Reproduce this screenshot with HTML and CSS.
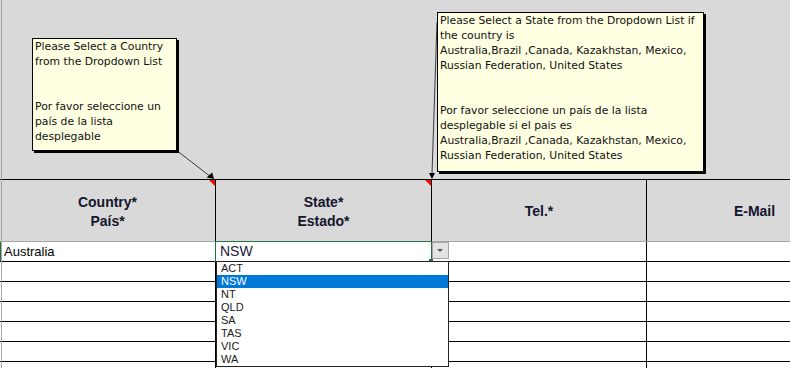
FILE: index.html
```html
<!DOCTYPE html>
<html lang="en">
<head>
    <meta charset="UTF-8">
    <title>Contact sheet</title>
    <link rel="stylesheet" href="styles.css">
</head>
<body>
    <div class="sheet">
        <div class="banner"></div>
        <div class="row head">
            <div class="cell col-a flag">Country*<br>País*</div>
            <div class="cell col-b flag">State*<br>Estado*</div>
            <div class="cell col-c">Tel.*</div>
            <div class="cell col-d">E-Mail</div>
        </div>
        <div class="row data first">
            <div class="cell col-a">Australia</div>
            <div class="cell col-b sel">NSW</div>
            <div class="cell col-c"></div>
            <div class="cell col-d"></div>
        </div>
        <div class="row data"><div class="cell col-a"></div><div class="cell col-b"></div><div class="cell col-c"></div><div class="cell col-d"></div></div>
        <div class="row data"><div class="cell col-a"></div><div class="cell col-b"></div><div class="cell col-c"></div><div class="cell col-d"></div></div>
        <div class="row data"><div class="cell col-a"></div><div class="cell col-b"></div><div class="cell col-c"></div><div class="cell col-d"></div></div>
        <div class="row data"><div class="cell col-a"></div><div class="cell col-b"></div><div class="cell col-c"></div><div class="cell col-d"></div></div>
        <div class="row data"><div class="cell col-a"></div><div class="cell col-b"></div><div class="cell col-c"></div><div class="cell col-d"></div></div>
        <div class="row data"><div class="cell col-a"></div><div class="cell col-b"></div><div class="cell col-c"></div><div class="cell col-d"></div></div>

        <!-- comment arrows -->
        <svg class="arrows" width="790" height="368" viewBox="0 0 790 368">
            <line x1="176" y1="150" x2="211" y2="177" stroke="#3a3a3a" stroke-width="1"/>
            <polygon points="214,179 206.6,177.6 212.2,172.6" fill="#000"/>
            <line x1="437" y1="22" x2="432" y2="174" stroke="#3a3a3a" stroke-width="1"/>
            <polygon points="429,173 435,173 432,179" fill="#000"/>
        </svg>

        <div class="note note-a">
            Please Select a Country<br>
            from the Dropdown List<br>
            <br>
            <br>
            Por favor seleccione un<br>
            país de la lista<br>
            desplegable
        </div>
        <div class="note note-b">
            Please Select a State from the Dropdown List if<br>
            the country is<br>
            Australia,Brazil ,Canada, Kazakhstan, Mexico,<br>
            Russian Federation, United States<br>
            <br>
            <br>
            Por favor seleccione un país de la lista<br>
            desplegable si el pais es<br>
            Australia,Brazil ,Canada, Kazakhstan, Mexico,<br>
            Russian Federation, United States
        </div>

        <div class="dd-btn"></div>
        <ul class="dd-list">
            <li>ACT</li>
            <li class="active">NSW</li>
            <li>NT</li>
            <li>QLD</li>
            <li>SA</li>
            <li>TAS</li>
            <li>VIC</li>
            <li>WA</li>
        </ul>
    </div>
</body>
</html>
```

FILE: styles.css
```css
html, body {
    margin: 0;
    padding: 0;
}
body {
    background: #d9d9d9;
    width: 790px;
    height: 368px;
    overflow: hidden;
    font-family: "Liberation Sans", Arial, sans-serif;
}
.sheet {
    position: relative;
    width: 790px;
    height: 368px;
    overflow: hidden;
}
.sheet::before {
    content: "";
    position: absolute;
    left: 1px;
    top: 0;
    width: 1px;
    height: 100%;
    background: #a6a6a6;
    z-index: 1;
}
.banner {
    height: 180px;
    box-sizing: border-box;
    border-bottom: 1px solid #000;
}
.row {
    display: flex;
    width: 864px;
}
.cell {
    flex: none;
    box-sizing: border-box;
    border-right: 1px solid #000;
}
.col-a { width: 216px; }
.col-b { width: 216px; }
.col-c { width: 215px; }
.col-d { width: 216px; }

.head {
    height: 62px;
    box-sizing: border-box;
    border-bottom: 1px solid #a6a6a6;
}
.head .cell {
    display: flex;
    align-items: center;
    justify-content: center;
    text-align: center;
    padding-top: 2px;
    font-weight: bold;
    font-size: 14px;
    line-height: 19px;
    color: #15152e;
    position: relative;
}
.head .flag::after {
    content: "";
    position: absolute;
    top: 0;
    right: 0;
    width: 0;
    height: 0;
    border-top: 6px solid #ff0000;
    border-left: 6px solid transparent;
}

.data {
    height: 20px;
    box-sizing: border-box;
    border-bottom: 1px solid #000;
    background: #fff;
}
.data .cell {
    font-size: 13px;
    line-height: 19px;
    padding-left: 4px;
    color: #000;
}
.first .col-a {
    box-shadow: inset 2px 0 0 #217346;
}
.data .sel {
    position: relative;
    font-size: 14px;
    color: #1a1a3a;
}
.sel::before {
    content: "";
    position: absolute;
    left: -1px;
    top: -1px;
    right: -1px;
    bottom: -1px;
    border: 1px solid #217346;
}
.sel::after {
    content: "";
    position: absolute;
    right: -2px;
    bottom: -2px;
    width: 4px;
    height: 4px;
    background: #217346;
}

.arrows {
    position: absolute;
    left: 0;
    top: 0;
    pointer-events: none;
}

.note {
    position: absolute;
    box-sizing: border-box;
    background: #ffffe1;
    border: 1px solid #000;
    box-shadow: 2px 2px 0 #000;
    padding: 0 2px;
    font-family: "DejaVu Sans", sans-serif;
    font-size: 10.8px;
    line-height: 15px;
    color: #111;
    white-space: nowrap;
    overflow: hidden;
}
.note-a {
    left: 32px;
    top: 38px;
    width: 145px;
    height: 113px;
}
.note-b {
    left: 437px;
    top: 12px;
    width: 267px;
    height: 160px;
}

.dd-btn {
    position: absolute;
    left: 432px;
    top: 242px;
    width: 17px;
    height: 17px;
    box-sizing: border-box;
    border: 1px solid #a6a6a6;
    background: #e3e3e3;
}
.dd-btn::after {
    content: "";
    position: absolute;
    left: 4px;
    top: 6px;
    width: 0;
    height: 0;
    border-left: 3px solid transparent;
    border-right: 3px solid transparent;
    border-top: 3px solid #555;
}
.dd-list {
    position: absolute;
    left: 216px;
    top: 261px;
    width: 233px;
    margin: 0;
    padding: 0;
    list-style: none;
    box-sizing: border-box;
    border: 1px solid #222;
    background: #fff;
    font-size: 11px;
    line-height: 13px;
    color: #1a1a1a;
}
.dd-list li {
    padding-left: 4px;
}
.dd-list .active {
    background: #0078d7;
    color: #fff;
}
```
